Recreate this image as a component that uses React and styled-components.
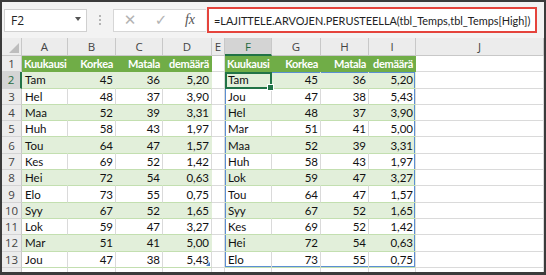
import React from "react";
import styled, { createGlobalStyle, css } from "styled-components";

const Global = createGlobalStyle`
  html, body { margin: 0; padding: 0; background: #fff; }
  * { box-sizing: border-box; }
`;

const Frame = styled.div`
  width: 546px;
  height: 275px;
  border-style: solid;
  border-color: #3b3b3b;
  border-width: 2px 2px 3px 2px;
  background: #f3f3f3;
  overflow: hidden;
  display: flex;
  flex-direction: column;
`;

const Bar = styled.div`
  height: 36px;
  flex: none;
  display: flex;
  align-items: center;
  padding: 0 5px 0 2px;
  font-family: "Open Sans", "Noto Sans", sans-serif;
`;

const NameBox = styled.div`
  width: 83px;
  height: 23px;
  background: #fff;
  border: 1px solid #d0d0d0;
  display: flex;
  align-items: center;
  justify-content: space-between;
  padding: 0 5px 0 6px;
  font-size: 12px;
  color: #222;
`;

const Caret = styled.span`
  width: 0;
  height: 0;
  border-left: 3.5px solid transparent;
  border-right: 3.5px solid transparent;
  border-top: 4px solid #555;
  margin-top: -3px;
`;

const Dots = styled.div`
  margin-left: 12px;
  display: flex;
  flex-direction: column;
  gap: 2px;
  span {
    width: 2px;
    height: 2px;
    background: #b5b5b5;
  }
`;

const Buttons = styled.div`
  margin-left: 12px;
  width: 93px;
  height: 23px;
  background: #fff;
  border: 1px solid #d6d6d6;
  border-right: none;
  display: flex;
  align-items: center;
  padding-left: 9px;
`;

const Btn = styled.span`
  width: ${p => p.$w}px;
  margin-left: ${p => p.$gap || 0}px;
  display: flex;
  justify-content: center;
  color: ${p => p.$dark ? "#555" : "#b3b3b3"};
  font-family: ${p => p.$serif ? '"Liberation Serif", serif' : '"DejaVu Sans", sans-serif'};
  font-style: ${p => p.$serif ? "italic" : "normal"};
  font-size: ${p => p.$size}px;
`;

const Formula = styled.div`
  margin-left: 1px;
  width: 330px;
  height: 26px;
  background: #fff;
  border: 2px solid #e5443c;
  display: flex;
  align-items: center;
  padding-left: 5px;
  font-family: Lato, "Open Sans", sans-serif;
  font-size: 10.9px;
  color: #222;
  white-space: nowrap;
  overflow: hidden;
`;

const Sheet = styled.div`
  flex: 1;
  display: grid;
  grid-template-columns: 20px 46px 48px 47px 49px 13px 47px 49px 48px 47px 1fr;
  grid-template-rows: 18px repeat(14, 16.3px);
  background: #fff;
  font-family: Lato, "Open Sans", sans-serif;
  overflow: hidden;
`;

const Corner = styled.div`
  background: #ececec;
  border-right: 1px solid #c8c8c8;
  border-bottom: 1px solid #c8c8c8;
  position: relative;
  &::after {
    content: "";
    position: absolute;
    right: 2px;
    bottom: 2px;
    width: 0;
    height: 0;
    border-left: 10px solid transparent;
    border-bottom: 10px solid #bdbdbd;
  }
`;

const ColHead = styled.div`
  background: ${p => p.$active ? "#d4d4d4" : "#ececec"};
  color: ${p => p.$active ? "#1f6b3f" : "#444"};
  border-right: 1px solid #c8c8c8;
  border-bottom: ${p => p.$active ? "2px solid #217346" : "1px solid #c8c8c8"};
  display: flex;
  align-items: center;
  justify-content: center;
  font-size: 11.5px;
  font-family: "Open Sans", sans-serif;
`;

const RowHead = styled.div`
  background: ${p => p.$active ? "#d4d4d4" : "#ececec"};
  color: ${p => p.$active ? "#1f6b3f" : "#444"};
  border-right: ${p => p.$active ? "2px solid #217346" : "1px solid #c8c8c8"};
  border-bottom: 1px solid #d4d4d4;
  display: flex;
  align-items: center;
  justify-content: center;
  font-size: 11.5px;
  font-family: "Open Sans", sans-serif;
`;

const Cell = styled.div`
  position: relative;
  display: flex;
  align-items: center;
  justify-content: ${p => p.$right ? "flex-end" : "flex-start"};
  padding: 0 2px 0 3px;
  font-size: 11.5px;
  white-space: nowrap;
  color: #111;
  background: #fff;
  border-right: 1px solid #dadada;
  border-bottom: 1px solid #dadada;
  ${p => p.$kind === "head" && css`
    background: #70ad47;
    color: #fff;
    font-weight: 700;
    font-size: 11px;
    letter-spacing: -0.3px;
    padding-left: 2px;
    border-right-color: #70ad47;
    border-bottom-color: #70ad47;
  `}
  ${p => p.$kind === "band" && css`
    background: #e2efda;
    border-right-color: #e2efda;
    border-bottom-color: #c3dfb0;
  `}
  ${p => p.$kind === "row" && css`
    border-bottom-color: #c3dfb0;
  `}
  ${p => p.$shadow && css`
    box-shadow: ${p.$shadow};
  `}
  ${p => p.$sel && css`
    outline: 2px solid #217346;
    outline-offset: -2px;
    &::after {
      content: "";
      position: absolute;
      right: -3px;
      bottom: -3px;
      width: 5px;
      height: 5px;
      background: #217346;
      border: 1px solid #fff;
      z-index: 2;
    }
  `}
  ${p => p.$handle && css`
    &::after {
      content: "";
      position: absolute;
      right: 1px;
      bottom: 1px;
      width: 0;
      height: 0;
      border-left: 4px solid transparent;
      border-bottom: 4px solid #4a7fc1;
    }
  `}
`;

const left = [
  ["Tam", 45, 36, "5,20"],
  ["Hel", 48, 37, "3,90"],
  ["Maa", 52, 39, "3,31"],
  ["Huh", 58, 43, "1,97"],
  ["Tou", 64, 47, "1,57"],
  ["Kes", 69, 52, "1,42"],
  ["Hei", 72, 54, "0,63"],
  ["Elo", 73, 55, "0,75"],
  ["Syy", 67, 52, "1,65"],
  ["Lok", 59, 47, "3,27"],
  ["Mar", 51, 41, "5,00"],
  ["Jou", 47, 38, "5,43"],
];

const sorted = [...left].sort((a, b) => a[1] - b[1]);

const header = ["Kuukausi", "Korkea", "Matala", "demäärä"];
const cols = ["A", "B", "C", "D", "E", "F", "G", "H", "I", "J"];
const BLUE = "#5b8fd3";

function spillShadow(r, c) {
  const parts = [];
  if (c === 0) parts.push(`inset 1px 0 0 ${BLUE}`);
  if (c === 3) parts.push(`inset -1px 0 0 ${BLUE}`);
  if (r === 0) parts.push(`inset 0 1px 0 ${BLUE}`);
  if (r === 11) parts.push(`inset 0 -1px 0 ${BLUE}`);
  return parts.length ? parts.join(", ") : undefined;
}

export default function App() {
  const rows = [];
  rows.push(
    <React.Fragment key="r1">
      <RowHead>1</RowHead>
      {header.map((h, i) => (
        <Cell key={"a" + i} $kind="head" $right={i > 0}>{h}</Cell>
      ))}
      <Cell />
      {header.map((h, i) => (
        <Cell key={"b" + i} $kind="head" $right={i > 0}>{h}</Cell>
      ))}
      <Cell />
    </React.Fragment>
  );
  for (let r = 0; r < 12; r++) {
    const kind = r % 2 === 0 ? "band" : "row";
    const L = left[r];
    const R = sorted[r];
    rows.push(
      <React.Fragment key={"r" + (r + 2)}>
        <RowHead $active={r === 0}>{r + 2}</RowHead>
        {L.map((v, i) => (
          <Cell key={"l" + i} $kind={kind} $right={i > 0} $handle={r === 11 && i === 3}>{v}</Cell>
        ))}
        <Cell />
        {R.map((v, i) => (
          <Cell
            key={"s" + i}
            $kind={kind}
            $right={i > 0}
            $sel={r === 0 && i === 0}
            $shadow={spillShadow(r, i)}
          >
            {v}
          </Cell>
        ))}
        <Cell />
      </React.Fragment>
    );
  }
  rows.push(
    <React.Fragment key="r14">
      <RowHead>14</RowHead>
      {Array.from({ length: 10 }).map((_, i) => <Cell key={i} />)}
    </React.Fragment>
  );

  return (
    <>
      <Global />
      <Frame>
        <Bar>
          <NameBox>F2<Caret /></NameBox>
          <Dots><span /><span /><span /></Dots>
          <Buttons>
            <Btn $w={14} $size={15}>✕</Btn>
            <Btn $w={18} $size={15} $gap={15}>✓</Btn>
            <Btn $w={16} $size={14} $gap={12} $serif $dark>fx</Btn>
          </Buttons>
          <Formula>=LAJITTELE.ARVOJEN.PERUSTEELLA(tbl_Temps,tbl_Temps[High])</Formula>
        </Bar>
        <Sheet>
          <Corner />
          {cols.map(c => (
            <ColHead key={c} $active={c === "F"}>{c}</ColHead>
          ))}
          {rows}
        </Sheet>
      </Frame>
    </>
  );
}
